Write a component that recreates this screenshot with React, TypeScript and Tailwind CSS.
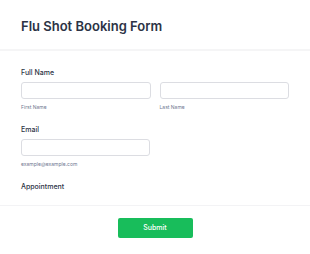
import React from 'react';

const App: React.FC = () => {
  return (
    <div className="w-[310px] h-[254px] bg-white font-['Inter',sans-serif] overflow-hidden">
      <div className="pl-[21px] pt-[18px] h-[49px]">
        <h1 className="text-[13px] leading-[16px] font-semibold text-[#2c3345]">Flu Shot Booking Form</h1>
      </div>
      <div className="h-[2px] bg-[#f5f5f6]"></div>

      <div className="px-[21px] pt-[17px]">
        <label className="block text-[7px] leading-[9px] font-medium text-[#2c3345]">Full Name</label>
        <div className="mt-[5px] flex gap-[9px]">
          <div className="w-[131px]">
            <div className="h-[17px] rounded-[3px] border border-[#dcdde2] bg-white"></div>
            <p className="mt-[5px] text-[5px] leading-[6px] text-[#6f7891]">First Name</p>
          </div>
          <div className="w-[131px]">
            <div className="h-[17px] rounded-[3px] border border-[#dcdde2] bg-white"></div>
            <p className="mt-[5px] text-[5px] leading-[6px] text-[#6f7891]">Last Name</p>
          </div>
        </div>

        <label className="mt-[15px] block text-[7px] leading-[9px] font-medium text-[#2c3345]">Email</label>
        <div className="mt-[5px] w-[129px]">
          <div className="h-[17px] rounded-[3px] border border-[#dcdde2] bg-white"></div>
          <p className="mt-[5px] text-[5px] leading-[6px] text-[#6f7891]">example@example.com</p>
        </div>

        <label className="mt-[15px] block text-[7px] leading-[9px] font-medium text-[#2c3345]">Appointment</label>
      </div>

      <div className="mt-[14px] h-px bg-[#f3f3f5]"></div>
      <div className="flex justify-center pt-[12px]">
        <button className="w-[75px] h-[20px] rounded-[2px] bg-[#18bd5b] text-white text-[7px] font-medium">Submit</button>
      </div>
    </div>
  );
};

export default App;
